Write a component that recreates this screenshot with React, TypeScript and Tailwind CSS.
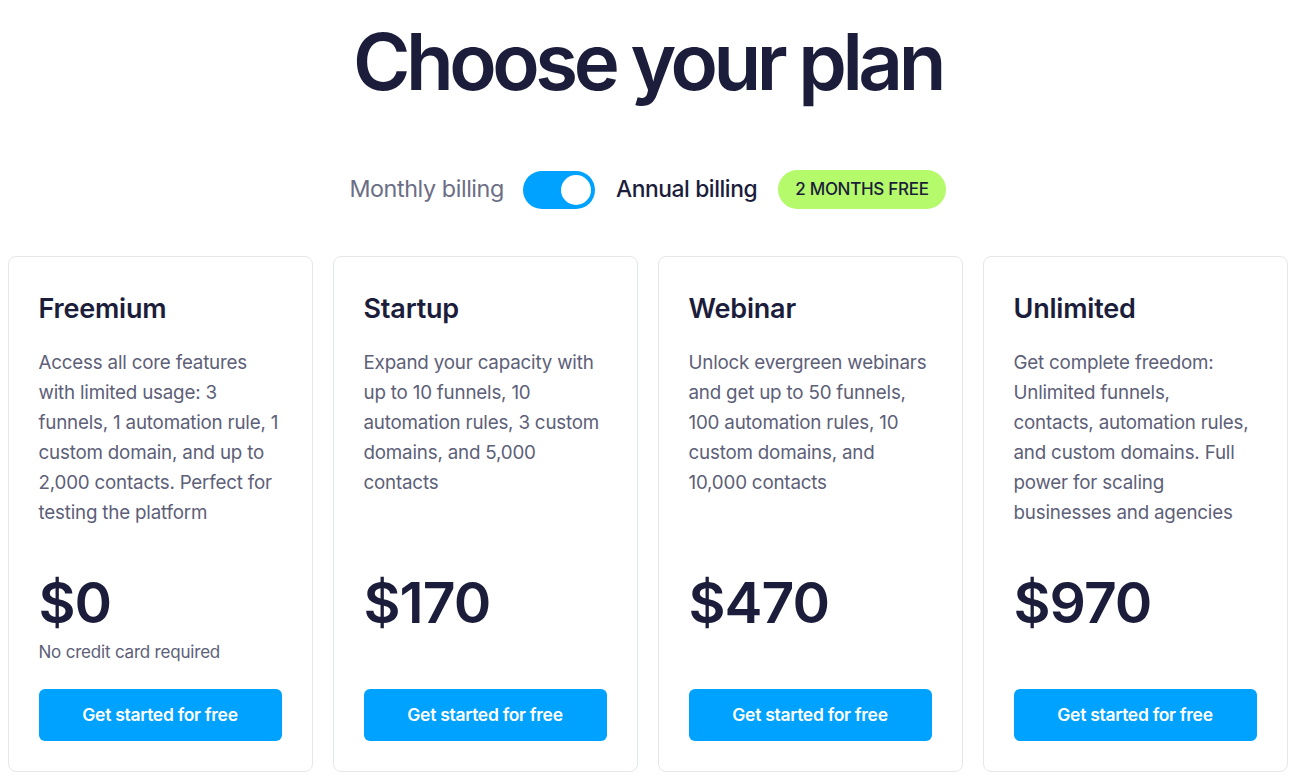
import { useState } from "react";

type Plan = {
  name: string;
  lines: string[];
  price: string;
  note?: string;
};

const PLANS: Plan[] = [
  {
    name: "Freemium",
    lines: [
      "Access all core features",
      "with limited usage: 3",
      "funnels, 1 automation rule, 1",
      "custom domain, and up to",
      "2,000 contacts. Perfect for",
      "testing the platform",
    ],
    price: "$0",
    note: "No credit card required",
  },
  {
    name: "Startup",
    lines: [
      "Expand your capacity with",
      "up to 10 funnels, 10",
      "automation rules, 3 custom",
      "domains, and 5,000",
      "contacts",
    ],
    price: "$170",
  },
  {
    name: "Webinar",
    lines: [
      "Unlock evergreen webinars",
      "and get up to 50 funnels,",
      "100 automation rules, 10",
      "custom domains, and",
      "10,000 contacts",
    ],
    price: "$470",
  },
  {
    name: "Unlimited",
    lines: [
      "Get complete freedom:",
      "Unlimited funnels,",
      "contacts, automation rules,",
      "and custom domains. Full",
      "power for scaling",
      "businesses and agencies",
    ],
    price: "$970",
  },
];

function PlanCard({ plan }: { plan: Plan }) {
  return (
    <div className="flex flex-col rounded-lg border border-[#e6e7eb] bg-white px-[30px] pb-[30px] pt-[36px]">
      <h3 className="text-[27px] font-semibold leading-[32px] tracking-[-0.2px] text-[#1b1d3b]">{plan.name}</h3>
      <div className="mt-[23px] h-[180px] text-[18.8px] leading-[30px] tracking-[-0.2px] text-[#5d6078]">
        {plan.lines.map((l) => (
          <p key={l} className="whitespace-nowrap">
            {l}
          </p>
        ))}
      </div>
      <p className="mt-[48px] text-[57px] font-semibold leading-[54px] tracking-[-1px] text-[#1b1d3b]">{plan.price}</p>
      <p className="mt-[10px] h-[24px] text-[17px] leading-[24px] tracking-[-0.2px] text-[#5d6078]">{plan.note ?? ""}</p>
      <button
        type="button"
        className="mt-[25px] h-[52px] w-full rounded-md bg-[#00a2ff] text-[17.5px] font-semibold tracking-[-0.3px] text-white hover:bg-[#0092e6]"
      >
        Get started for free
      </button>
    </div>
  );
}

export default function App() {
  const [annual, setAnnual] = useState(true);

  return (
    <div className="min-h-screen bg-white font-['Inter',sans-serif]">
      <div className="mx-auto max-w-[1280px]">
        <h1 className="pt-[14px] text-center text-[78px] font-semibold leading-[96px] tracking-[-4.5px] text-[#1b1d3b]">
          Choose your plan
        </h1>

        <div className="mt-[60px] flex items-center justify-center">
          <span className="text-[23.3px] tracking-[-0.4px] text-[#6b6e85]">Monthly billing</span>
          <button
            type="button"
            onClick={() => setAnnual((v) => !v)}
            className={`ml-[19px] flex h-[38px] w-[72px] items-center rounded-full p-[4px] ${
              annual ? "justify-end bg-[#00a2ff]" : "justify-start bg-gray-300"
            }`}
          >
            <span className="h-[30px] w-[30px] rounded-full bg-white" />
          </button>
          <span className="ml-[21px] text-[22.8px] font-medium tracking-[-0.4px] text-[#1b1d3b]">Annual billing</span>
          <span className="ml-[21px] flex h-[39px] items-center rounded-full bg-[#b4fa6a] px-[17px] text-[17px] font-medium tracking-[-0.3px] text-[#1b1d3b]">
            2 MONTHS FREE
          </span>
        </div>

        <div className="mt-[47px] grid grid-cols-4 gap-[20px]">
          {PLANS.map((p) => (
            <PlanCard key={p.name} plan={p} />
          ))}
        </div>
      </div>
    </div>
  );
}
